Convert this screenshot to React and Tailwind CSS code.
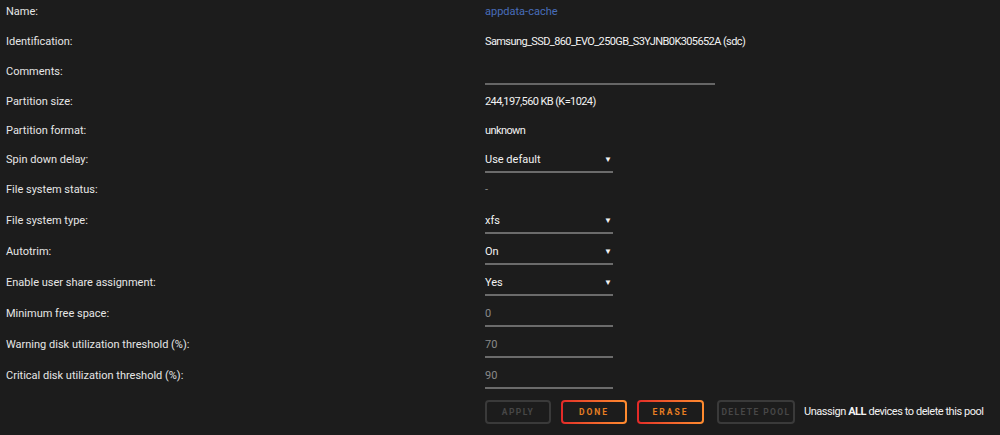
import React from "react";

const rows = [
  { label: "Name:", h: "h-[30px]", type: "link", value: "appdata-cache" },
  { label: "Identification:", h: "h-[29px]", type: "text", value: "Samsung_SSD_860_EVO_250GB_S3YJNB0K305652A (sdc)" },
  { label: "Comments:", h: "h-[31px]", type: "comment" },
  { label: "Partition size:", h: "h-[29px]", type: "text", value: "244,197,560 KB (K=1024)" },
  { label: "Partition format:", h: "h-[29px]", type: "text", value: "unknown" },
  { label: "Spin down delay:", h: "h-[30px]", type: "select", value: "Use default" },
  { label: "File system status:", h: "h-[30px]", type: "dim", value: "-" },
  { label: "File system type:", h: "h-[31px]", type: "select", value: "xfs" },
  { label: "Autotrim:", h: "h-[31px]", type: "select", value: "On" },
  { label: "Enable user share assignment:", h: "h-[31px]", type: "select", value: "Yes" },
  { label: "Minimum free space:", h: "h-[31px]", type: "input", value: "0" },
  { label: "Warning disk utilization threshold (%):", h: "h-[31px]", type: "input", value: "70" },
  { label: "Critical disk utilization threshold (%):", h: "h-[31px]", type: "input", value: "90" },
];

const Value = ({ row }) => {
  if (row.type === "link") return <span className="text-[#486dba]">{row.value}</span>;
  if (row.type === "text") return <span className="tracking-[-0.6px] text-[#f2f2f2]">{row.value}</span>;
  if (row.type === "dim") return <span className="text-[#8a8a8a]">{row.value}</span>;
  if (row.type === "comment")
    return (
      <div className="relative h-[16px] w-[230px]">
        <div className="absolute left-0 right-0 top-[19px] h-[2px] bg-[#666]" />
      </div>
    );
  // select / input: text with an underline below it
  return (
    <div className="relative flex h-[16px] w-[128px] items-center justify-between">
      <span className={row.type === "select" ? "text-[#f2f2f2]" : "text-[#8a8a8a]"}>{row.value}</span>
      {row.type === "select" && <span className="mr-[1px] text-[8px] text-[#f2f2f2]">▼</span>}
      <div className="absolute left-0 right-0 top-[19px] h-[2px] bg-[#6b6b6b]" />
    </div>
  );
};

const Btn = ({ label, active, w }) =>
  active ? (
    <div className={`shrink-0 rounded-[4px] bg-gradient-to-r from-[#e22828] to-[#ff8c2f] p-[2px] ${w}`}>
      <div className="flex h-[20px] items-center justify-center whitespace-nowrap rounded-[2px] bg-[#1c1c1c] text-[8.5px] font-bold tracking-[2px] text-[#e67e22]">
        {label}
      </div>
    </div>
  ) : (
    <div className={`flex h-[24px] shrink-0 items-center justify-center whitespace-nowrap rounded-[4px] border-2 border-[#3a3a3a] text-[8.5px] font-bold tracking-[1.4px] text-[#474747] ${w}`}>
      {label}
    </div>
  );

export default function App() {
  return (
    <div
      className="h-[435px] w-[1000px] overflow-hidden bg-[#1c1c1c] text-[11px] leading-[16px] text-[#e6e6e6]"
      style={{ fontFamily: 'Roboto, "Liberation Sans", sans-serif' }}
    >
      <div className="-mt-[3px]">
        {rows.map((row) => (
          <div key={row.label} className={`flex items-center ${row.h}`}>
            <div className="w-[485px] shrink-0 pl-[6px]">{row.label}</div>
            <Value row={row} />
          </div>
        ))}
      </div>
      <div className="mt-[9px] flex items-center whitespace-nowrap pl-[485px]">
        <Btn label="APPLY" w="w-[66px]" />
        <div className="ml-[10px]">
          <Btn label="DONE" active w="w-[66px]" />
        </div>
        <div className="ml-[10px]">
          <Btn label="ERASE" active w="w-[67px]" />
        </div>
        <div className="ml-[13px]">
          <Btn label="DELETE POOL" w="w-[78px]" />
        </div>
        <span className="ml-[9px] tracking-[-0.45px] text-[#f2f2f2]">
          Unassign <b>ALL</b> devices to delete this pool
        </span>
      </div>
    </div>
  );
}
